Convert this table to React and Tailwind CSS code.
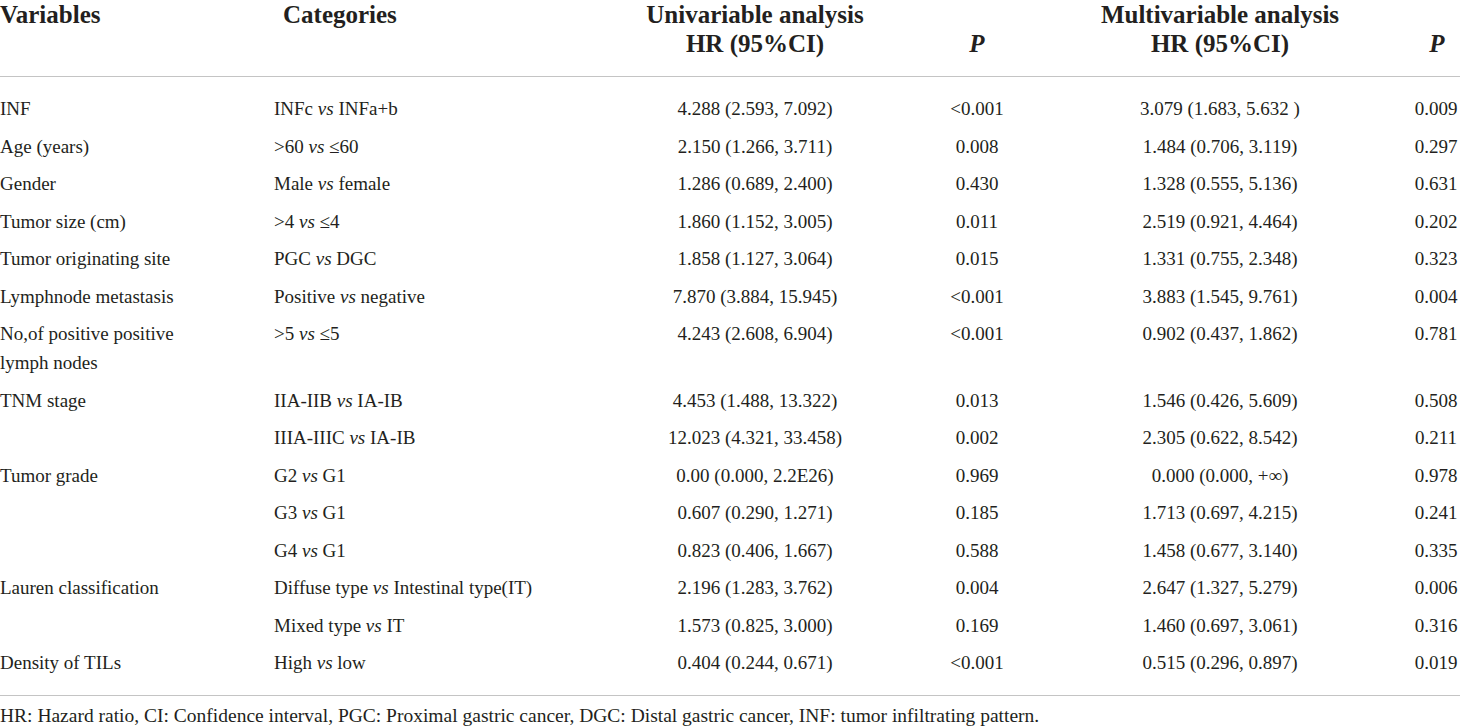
import React from 'react';

const rows = [
    { v: ['INF'], c: ['INFc', 'INFa+b'], hr1: '4.288 (2.593, 7.092)', p1: '<0.001', hr2: '3.079 (1.683, 5.632 )', p2: '0.009' },
    { v: ['Age (years)'], c: ['>60', '≤60'], hr1: '2.150 (1.266, 3.711)', p1: '0.008', hr2: '1.484 (0.706, 3.119)', p2: '0.297' },
    { v: ['Gender'], c: ['Male', 'female'], hr1: '1.286 (0.689, 2.400)', p1: '0.430', hr2: '1.328 (0.555, 5.136)', p2: '0.631' },
    { v: ['Tumor size (cm)'], c: ['>4', '≤4'], hr1: '1.860 (1.152, 3.005)', p1: '0.011', hr2: '2.519 (0.921, 4.464)', p2: '0.202' },
    { v: ['Tumor originating site'], c: ['PGC', 'DGC'], hr1: '1.858 (1.127, 3.064)', p1: '0.015', hr2: '1.331 (0.755, 2.348)', p2: '0.323' },
    { v: ['Lymphnode metastasis'], c: ['Positive', 'negative'], hr1: '7.870 (3.884, 15.945)', p1: '<0.001', hr2: '3.883 (1.545, 9.761)', p2: '0.004' },
    { v: ['No,of positive positive', 'lymph nodes'], c: ['>5', '≤5'], hr1: '4.243 (2.608, 6.904)', p1: '<0.001', hr2: '0.902 (0.437, 1.862)', p2: '0.781' },
    { v: ['TNM stage'], c: ['IIA-IIB', 'IA-IB'], hr1: '4.453 (1.488, 13.322)', p1: '0.013', hr2: '1.546 (0.426, 5.609)', p2: '0.508' },
    { v: [], c: ['IIIA-IIIC', 'IA-IB'], hr1: '12.023 (4.321, 33.458)', p1: '0.002', hr2: '2.305 (0.622, 8.542)', p2: '0.211' },
    { v: ['Tumor grade'], c: ['G2', 'G1'], hr1: '0.00 (0.000, 2.2E26)', p1: '0.969', hr2: '0.000 (0.000, +∞)', p2: '0.978' },
    { v: [], c: ['G3', 'G1'], hr1: '0.607 (0.290, 1.271)', p1: '0.185', hr2: '1.713 (0.697, 4.215)', p2: '0.241' },
    { v: [], c: ['G4', 'G1'], hr1: '0.823 (0.406, 1.667)', p1: '0.588', hr2: '1.458 (0.677, 3.140)', p2: '0.335' },
    { v: ['Lauren classification'], c: ['Diffuse type', 'Intestinal type(IT)'], hr1: '2.196 (1.283, 3.762)', p1: '0.004', hr2: '2.647 (1.327, 5.279)', p2: '0.006' },
    { v: [], c: ['Mixed type', 'IT'], hr1: '1.573 (0.825, 3.000)', p1: '0.169', hr2: '1.460 (0.697, 3.061)', p2: '0.316' },
    { v: ['Density of TILs'], c: ['High', 'low'], hr1: '0.404 (0.244, 0.671)', p1: '<0.001', hr2: '0.515 (0.296, 0.897)', p2: '0.019' },
];

const cols = 'grid grid-cols-[274px_366px_230px_214px_272px_104px]';

const App = () => {
    return (
        <div className="w-[1460px] h-[728px] bg-white text-[#231f20] font-['Liberation_Serif',serif] overflow-hidden">
            {/* Header */}
            <div className={`${cols} text-[25px] font-bold leading-[29px] pb-[18px] border-b border-[#c4c4c4]`}>
                <div>Variables</div>
                <div className="pl-[9px]">Categories</div>
                <div className="text-center">
                    <div>Univariable analysis</div>
                    <div>HR (95%CI)</div>
                </div>
                <div className="text-center flex items-end justify-center italic">P</div>
                <div className="text-center">
                    <div>Multivariable analysis</div>
                    <div>HR (95%CI)</div>
                </div>
                <div className="pl-[58px] text-center flex items-end justify-center italic">P</div>
            </div>

            {/* Body */}
            <div className="py-[13px] border-b border-[#c4c4c4] text-[19px] leading-[29px]">
                {rows.map((r, i) => (
                    <div key={i} className={`${cols} py-[4.25px]`}>
                        <div>
                            {r.v.map((line, j) => (
                                <div key={j}>{line}</div>
                            ))}
                        </div>
                        <div>
                            {r.c[0]} <i>vs</i> {r.c[1]}
                        </div>
                        <div className="text-center">{r.hr1}</div>
                        <div className="text-center">{r.p1}</div>
                        <div className="text-center">{r.hr2}</div>
                        <div className="pl-[56px] text-center">{r.p2}</div>
                    </div>
                ))}
            </div>

            {/* Footnote */}
            <div className="pt-[8px] text-[19.5px] leading-[24px] whitespace-nowrap">
                HR: Hazard ratio, CI: Confidence interval, PGC: Proximal gastric cancer, DGC: Distal gastric cancer, INF: tumor infiltrating pattern.
            </div>
        </div>
    );
};

export default App;
